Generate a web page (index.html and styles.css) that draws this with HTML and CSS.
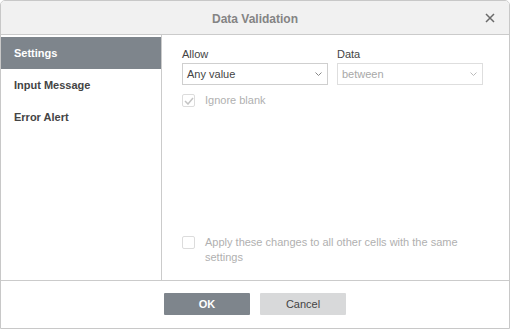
FILE: index.html
```html
<!DOCTYPE html>
<html lang="en">
<head>
    <meta charset="UTF-8">
    <title>Data Validation</title>
    <link rel="stylesheet" href="styles.css">
</head>
<body>
    <div class="dialog">
        <div class="dialog-header">
            <span class="title">Data Validation</span>
            <span class="close">
                <svg width="10" height="10" viewBox="0 0 10 10"><path d="M1 1 L9 9 M9 1 L1 9" stroke="#6a6a6a" stroke-width="1.5"/></svg>
            </span>
        </div>
        <div class="dialog-body">
            <div class="sidebar">
                <div class="tab active">Settings</div>
                <div class="tab">Input Message</div>
                <div class="tab">Error Alert</div>
            </div>
            <div class="content">
                <div class="row">
                    <div class="field">
                        <label>Allow</label>
                        <div class="select">
                            <span>Any value</span>
                            <svg class="caret" width="7" height="4" viewBox="0 0 7 4"><path d="M0.5 0.5 L3.5 3.5 L6.5 0.5" fill="none" stroke="#888" stroke-width="1"/></svg>
                        </div>
                    </div>
                    <div class="field">
                        <label>Data</label>
                        <div class="select disabled">
                            <span>between</span>
                            <svg class="caret" width="7" height="4" viewBox="0 0 7 4"><path d="M0.5 0.5 L3.5 3.5 L6.5 0.5" fill="none" stroke="#bbb" stroke-width="1"/></svg>
                        </div>
                    </div>
                </div>
                <div class="check disabled">
                    <span class="box">
                        <svg width="10" height="8" viewBox="0 0 10 8"><path d="M1 4 L4 7 L9 1" fill="none" stroke="#c4c4c4" stroke-width="1.5"/></svg>
                    </span>
                    <span class="check-label">Ignore blank</span>
                </div>
                <div class="spacer"></div>
                <div class="check disabled">
                    <span class="box"></span>
                    <span class="check-label">Apply these changes to all other cells with the same settings</span>
                </div>
            </div>
        </div>
        <div class="dialog-footer">
            <button class="btn primary">OK</button>
            <button class="btn">Cancel</button>
        </div>
    </div>
</body>
</html>
```

FILE: styles.css
```css
body {
    margin: 0;
    font-family: "Liberation Sans", Arial, sans-serif;
    font-size: 11px;
    color: #444;
}

.dialog {
    width: 508px;
    height: 327px;
    border: 1px solid #c8c8c8;
    border-radius: 5px 5px 0 0;
    display: flex;
    flex-direction: column;
    background: #fff;
    overflow: hidden;
}

.dialog-header {
    height: 33px;
    border-bottom: 1px solid #cbcbcb;
    background: #f1f1f1;
    display: flex;
    align-items: center;
    justify-content: center;
    position: relative;
}

.title {
    font-size: 12px;
    font-weight: bold;
    color: #848484;
    margin-top: 2px;
}

.close {
    position: absolute;
    right: 14px;
    top: 12px;
    line-height: 0;
}

.dialog-body {
    display: flex;
    height: 245px;
    border-bottom: 1px solid #cbcbcb;
}

.sidebar {
    width: 160px;
    border-right: 1px solid #cbcbcb;
    padding-top: 2px;
}

.tab {
    height: 32px;
    line-height: 32px;
    padding-left: 13px;
    font-weight: bold;
    color: #444;
}

.tab.active {
    background: #7e858c;
    color: #fff;
}

.content {
    flex: 1;
    padding: 13px 0 0 20px;
    display: flex;
    flex-direction: column;
}

.row {
    display: flex;
    gap: 9px;
}

.field label {
    display: block;
    font-size: 11px;
    color: #444;
    height: 15px;
}

.select {
    height: 20px;
    width: 135px;
    border: 1px solid #cfcfcf;
    display: flex;
    align-items: center;
    justify-content: space-between;
    padding: 0 5px 0 4px;
    color: #444;
}

.select.disabled {
    color: #a8a8a8;
    border-color: #dedede;
}

.check {
    display: flex;
    align-items: flex-start;
    margin-top: 9px;
    width: 290px;
}

.box {
    width: 11px;
    height: 11px;
    border: 1px solid #dcdcdc;
    border-radius: 2px;
    display: flex;
    align-items: center;
    justify-content: center;
    flex-shrink: 0;
    margin-right: 10px;
}

.check.disabled .check-label {
    color: #b0b0b0;
    line-height: 15px;
    margin-top: -1px;
}

.spacer {
    flex: 1;
}

.check:last-child {
    margin-bottom: 15px;
}

.dialog-footer {
    flex: 1;
    display: flex;
    justify-content: center;
    align-items: center;
    gap: 10px;
    padding-bottom: 2px;
}

.btn {
    width: 86px;
    height: 22px;
    border: none;
    border-radius: 1px;
    background: #d8d9da;
    color: #444;
    font-family: "Liberation Sans", Arial, sans-serif;
    font-size: 11px;
    cursor: pointer;
}

.btn.primary {
    background: #7e858c;
    color: #fff;
    font-weight: bold;
}
```
